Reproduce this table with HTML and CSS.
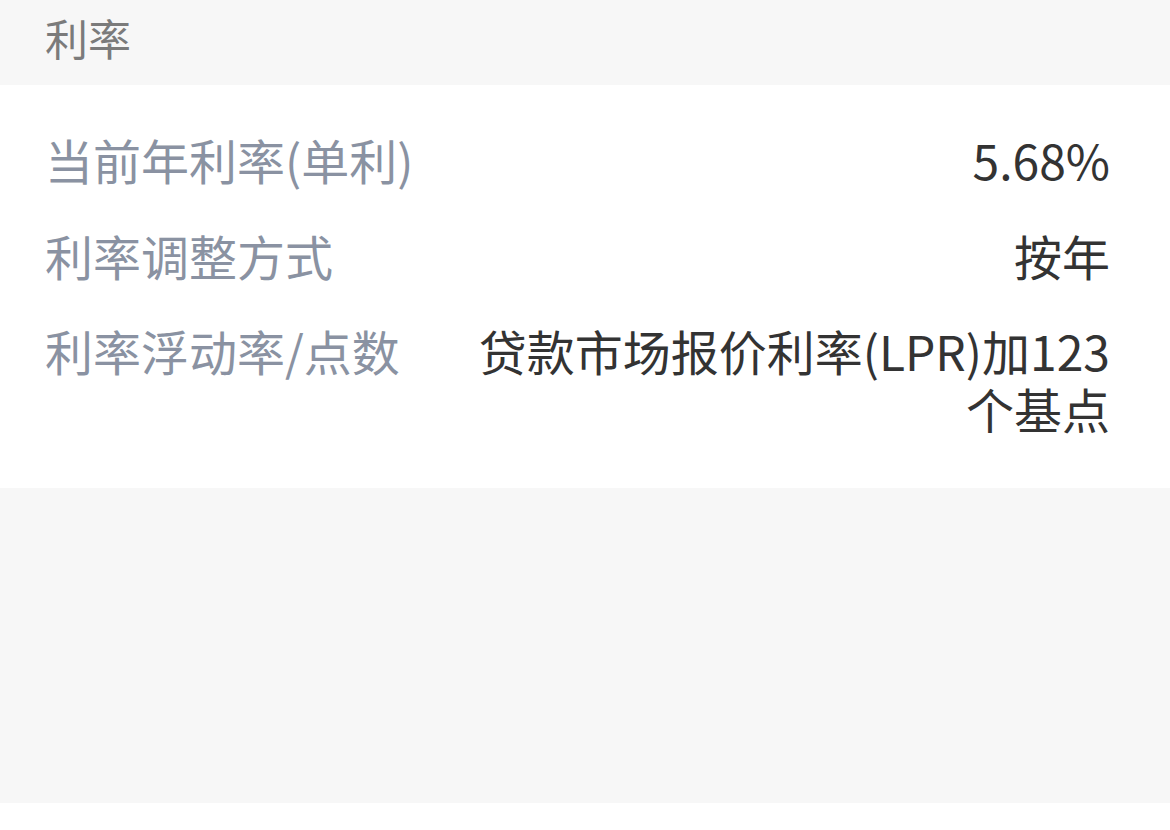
FILE: index.html
```html
<!DOCTYPE html>
<html lang="zh-CN">

<head>
    <meta charset="UTF-8">
    <meta name="viewport" content="width=device-width, initial-scale=1.0">
    <title>利率</title>
    <link rel="stylesheet" href="styles.css">
</head>

<body>
    <div class="page">
        <div class="section-title">利率</div>

        <div class="info-card">
            <div class="info-row">
                <span class="info-label">当前年利率(单利)</span>
                <span class="info-value">5.68%</span>
            </div>
            <div class="info-row">
                <span class="info-label">利率调整方式</span>
                <span class="info-value">按年</span>
            </div>
            <div class="info-row">
                <span class="info-label">利率浮动率/点数</span>
                <span class="info-value">贷款市场报价利率(LPR)加123个基点</span>
            </div>
        </div>

        <div class="spacer"></div>
        <div class="bottom-bar"></div>
    </div>
</body>

</html>
```

FILE: styles.css
```css
/* Global Styles */
body {
    margin: 0;
    font-family: "Noto Sans CJK SC", "Noto Sans", sans-serif;
    background-color: #f7f7f7;
    color: #333;
}

.page {
    display: flex;
    flex-direction: column;
    min-height: 100vh;
}

/* Section header */
.section-title {
    height: 85px;
    box-sizing: border-box;
    display: flex;
    align-items: center;
    padding: 0 0 12px 45px;
    font-size: 43px;
    color: #7b7b7b;
    background-color: #f7f7f7;
}

/* Info card */
.info-card {
    background-color: #fff;
    padding: 46px 60px 51px 45px;
    display: flex;
    flex-direction: column;
    gap: 38px;
}

.info-row {
    display: flex;
    justify-content: space-between;
    align-items: flex-start;
    font-size: 48px;
    line-height: 1.2;
}

.info-label {
    flex-shrink: 0;
    color: #8a92a2;
}

.info-value {
    margin-left: 60px;
    text-align: right;
    color: #333;
}

.spacer {
    flex: 1;
    background-color: #f7f7f7;
}

.bottom-bar {
    height: 27px;
    background-color: #fff;
}
```
